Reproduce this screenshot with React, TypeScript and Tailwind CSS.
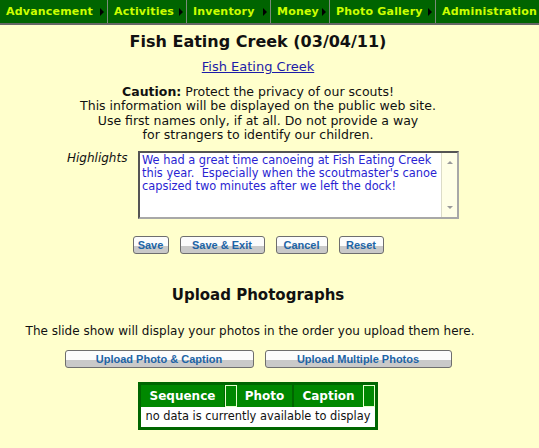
import React from "react";

const navItems: { n: string; w: string }[] = [
  { n: "Advancement", w: "w-[108px]" },
  { n: "Activities", w: "w-[79px]" },
  { n: "Inventory", w: "w-[84px]" },
  { n: "Money", w: "w-[59px]" },
  { n: "Photo Gallery", w: "w-[106px]" },
  { n: "Administration", w: "flex-1" },
];

function Btn({ label, w }: { label: string; w: string }) {
  return (
    <button
      className={`${w} h-[18px] rounded-[3px] border border-[#6e6e6e] bg-[linear-gradient(#fcfcfc_0%,#fcfcfc_58%,#c9c9c9_58%,#c9c9c9_100%)] font-['Liberation_Sans',sans-serif] text-[11px] font-bold leading-[16px] text-[#1d64a6]`}
    >
      {label}
    </button>
  );
}

export default function App() {
  return (
    <div className="min-h-[448px] w-[539px] bg-[#ffffcc] font-['DejaVu_Sans',sans-serif] text-[#111111]">
      <nav className="flex h-[25px] border-b-2 border-[#666666] bg-[#006400]">
        {navItems.map(({ n, w }, i) => (
          <div
            key={n}
            className={`${w} flex shrink-0 items-center justify-between pl-[6px] ${i < navItems.length - 1 ? "border-r border-[#7a8a7a] pr-[3px]" : ""}`}
          >
            <span className="whitespace-nowrap text-[11px] font-bold leading-none tracking-[0.2px] text-[#ccff00]">{n}</span>
            {i < navItems.length - 1 && (
              <span className="h-0 w-0 border-y-[4px] border-l-[4px] border-y-transparent border-l-black" />
            )}
          </div>
        ))}
      </nav>

      <div className="flex w-[516px] flex-col items-center">
        <h1 className="mt-[7px] text-[16px] font-bold leading-[20px]">Fish Eating Creek (03/04/11)</h1>
        <a className="mt-[7px] text-[13px] leading-[16px] text-[#1c1ca8] underline">Fish Eating Creek</a>

        <div className="mt-[10px] text-center text-[12.5px] leading-[14.4px]">
          <div>
            <b>Caution:</b> Protect the privacy of our scouts!
          </div>
          <div>This information will be displayed on the public web site.</div>
          <div>Use first names only, if at all. Do not provide a way</div>
          <div>for strangers to identify our children.</div>
        </div>

        <div className="ml-[10px] mt-[8px] flex">
          <div className="w-[71px] text-[12px] italic leading-[14px]">Highlights</div>
          <div className="flex h-[68px] w-[321px] border-2 border-[#a8a8a8] bg-white [border-style:inset]">
            <div className="flex-1 px-[2px] pt-[1px] text-[11.4px] leading-[13px] text-[#2a1fd2]">
              We had a great time canoeing at Fish Eating Creek this year.&nbsp; Especially when the scoutmaster's canoe
              capsized two minutes after we left the dock!
            </div>
            <div className="flex w-[16px] flex-col items-center justify-between border-l border-[#dcdcc8] bg-[#ffffe6] py-[8px]">
              <span className="h-0 w-0 border-x-[3px] border-b-[3px] border-x-transparent border-b-[#9a9a9a]" />
              <span className="h-0 w-0 border-x-[3px] border-t-[3px] border-x-transparent border-t-[#9a9a9a]" />
            </div>
          </div>
        </div>

        <div className="mt-[17px] flex gap-[11px]">
          <Btn label="Save" w="w-[36px]" />
          <Btn label="Save & Exit" w="w-[85px]" />
          <Btn label="Cancel" w="w-[52px]" />
          <Btn label="Reset" w="w-[45px]" />
        </div>

        <h2 className="mt-[32px] text-[15px] font-bold leading-[18px]">Upload Photographs</h2>
        <p className="mt-[20px] pr-[16px] text-[12px] leading-[14px]">
          The slide show will display your photos in the order you upload them here.
        </p>

        <div className="mt-[12px] flex gap-[11px]">
          <Btn label="Upload Photo & Caption" w="w-[189px]" />
          <Btn label="Upload Multiple Photos" w="w-[187px]" />
        </div>

        <div className="mt-[14px] w-[240px] border-[3px] border-[#006600] bg-[#006600]">
          <div className="flex h-[22px] text-[12px] font-bold text-white">
            <div className="flex w-[83px] items-center justify-center bg-[#008800]">Sequence</div>
            <div className="ml-[1px] w-[12px] border border-[#e6ffcc] bg-[#008800]" />
            <div className="flex w-[55px] items-center justify-center bg-[#008800]">Photo</div>
            <div className="ml-[2px] flex w-[69px] items-center justify-center bg-[#008800]">Caption</div>
            <div className="w-[12px] border border-[#e6ffcc] bg-[#008800]" />
          </div>
          <div className="flex h-[20px] items-center justify-center bg-white text-[11.4px]">
            no data is currently available to display
          </div>
        </div>
      </div>
    </div>
  );
}
